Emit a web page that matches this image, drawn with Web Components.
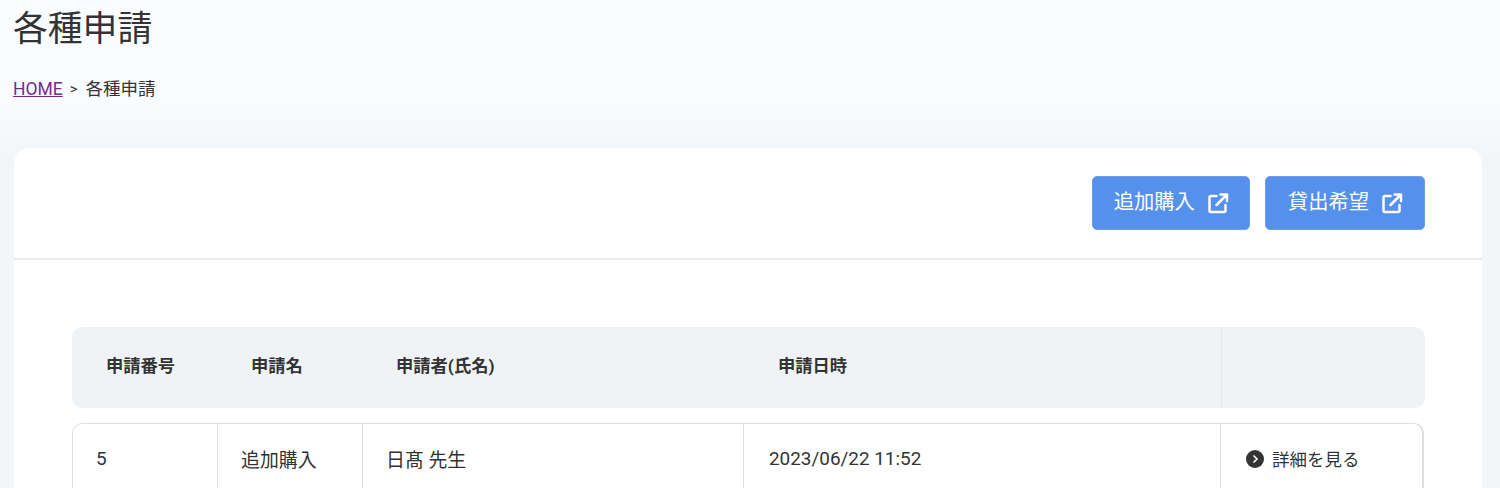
<!DOCTYPE html>
<html lang="ja">
<head>
<meta charset="utf-8">
<style>
  html, body { height: 100%; }
  body {
    margin: 0;
    overflow: hidden;
    font-family: Roboto, "Noto Sans CJK JP", sans-serif;
    color: #333;
    background: linear-gradient(#f8fcff 0, #f9fcff 100px, #f2f6f9 160px, #f2f6f9 100%);
  }
</style>
</head>
<body>
<apply-page>
  <span slot="title">各種申請</span>
  <page-crumbs slot="crumbs" current="各種申請"></page-crumbs>
  <apply-card>
    <link-button slot="actions" narrow>追加購入</link-button>
    <link-button slot="actions">貸出希望</link-button>
    <apply-table></apply-table>
  </apply-card>
</apply-page>

<script>
class ApplyPage extends HTMLElement {
  constructor() {
    super();
    this.attachShadow({ mode: "open" });
    this.shadowRoot.innerHTML = `
    <style>
      :host { display: block; padding: 0 18px 0 14px; }
      h1 { margin: 0; padding-top: 9px; font-size: 34.800px; line-height: 41px; font-weight: 400; color: #333; margin-left: -1px; }
      .crumbs { padding-top: 28px; height: 70px; }
    </style>
    <h1><slot name="title"></slot></h1>
    <div class="crumbs"><slot name="crumbs"></slot></div>
    <slot></slot>
    `;
  }
}
customElements.define("apply-page", ApplyPage);

class PageCrumbs extends HTMLElement {
  constructor() {
    super();
    this.attachShadow({ mode: "open" });
    this.shadowRoot.innerHTML = `
    <style>
      :host { display: flex; align-items: center; font-size: 17.500px; line-height: 22px; color: #333; margin-left: -1px; }
      a { color: #6f2c91; text-decoration: underline; }
      .sep { margin: 0 8px 0 7px; font-size: 15px; }
    </style>
    <a href="#">HOME</a><span class="sep">&gt;</span><span class="cur"></span>
    `;
  }
  connectedCallback() {
    this.shadowRoot.querySelector(".cur").textContent = this.getAttribute("current");
  }
}
customElements.define("page-crumbs", PageCrumbs);

class ApplyCard extends HTMLElement {
  constructor() {
    super();
    this.attachShadow({ mode: "open" });
    this.shadowRoot.innerHTML = `
    <style>
      :host { display: block; background: #fff; border-radius: 16px; height: 400px; }
      .top { display: flex; justify-content: flex-end; gap: 15px; padding: 28px 57px 28px 0; border-bottom: 2px solid #e9ecef; }
      .body { padding: 67px 57px 0 58px; }
    </style>
    <div class="top"><slot name="actions"></slot></div>
    <div class="body"><slot></slot></div>
    `;
  }
}
customElements.define("apply-card", ApplyCard);

class LinkButton extends HTMLElement {
  constructor() {
    super();
    this.attachShadow({ mode: "open" });
    this.shadowRoot.innerHTML = `
    <style>
      :host { display: flex; align-items: center; gap: 12px; box-sizing: border-box; height: 54px; padding: 0 21px 7px 22px; background: #5590ed; border: 1px solid #6d9eec; border-radius: 5px; color: #fff; font-size: 20.300px; cursor: pointer; }
      :host([narrow]) { padding-left: 21px; padding-right: 20px; }
      svg { width: 22px; height: 22px; margin-top: 7px; }
    </style>
    <slot></slot>
    <svg viewBox="0 0 22 22" fill="none" stroke="#fff" stroke-width="2.500" stroke-linecap="round" stroke-linejoin="round">
      <path d="M9.500 4H4a1.500 1.500 0 0 0-1.500 1.500V18.500A1.500 1.500 0 0 0 4 20h13a1.500 1.500 0 0 0 1.500-1.500V13"/>
      <path d="M9.500 13 19.500 3M13.500 2.500h6.500V9"/>
    </svg>
    `;
  }
}
customElements.define("link-button", LinkButton);

class ApplyTable extends HTMLElement {
  constructor() {
    super();
    this.attachShadow({ mode: "open" });
    this.shadowRoot.innerHTML = `
    <style>
      :host { display: block; }
      .head, .row { display: grid; }
      .head { grid-template-columns: 145px 145px 382px 442px 1fr; height: 81px; margin-bottom: 15px; background: #f0f3f6; border-radius: 10px; align-items: center; font-size: 17.300px; font-weight: 700; color: #333; }
      .head div { padding-left: 34px; padding-bottom: 6px; }
      .head .last { height: 100%; padding: 0; border-left: 1px solid #e3e6e9; margin-left: 35px; }
      .row { grid-template-columns: 144px 145px 381px 477px 1fr; height: 90px; margin-right: 1px; border: 1px solid #dedede; border-right-width: 2px; border-bottom: 0; border-radius: 10px 10px 0 0; box-sizing: border-box; font-size: 18.900px; color: #333; }
      .row > div { display: flex; align-items: center; padding: 0 0 20px 23px; border-left: 1px solid #dedede; }
      .row > div:first-child { border-left: 0; padding-left: 23px; }
      .row > div.more { padding-left: 25px; font-size: 17.500px; gap: 8px; }
      .row > div:nth-child(4) { padding-left: 25px; }
      .more svg { width: 18px; height: 18px; flex: none; }
    </style>
    <div class="head">
      <div>申請番号</div><div>申請名</div><div>申請者(氏名)</div><div>申請日時</div><div class="last"></div>
    </div>
    <div class="row">
      <div>5</div><div>追加購入</div><div>日髙 先生</div><div>2023/06/22 11:52</div>
      <div class="more">
        <svg viewBox="0 0 18 18"><circle cx="9" cy="9" r="9" fill="#333"/><path d="M7.500 5.500 11 9l-3.500 3.500" fill="none" stroke="#fff" stroke-width="1.600"/></svg>
        <span>詳細を見る</span>
      </div>
    </div>
    `;
  }
}
customElements.define("apply-table", ApplyTable);
</script>
</body>
</html>
